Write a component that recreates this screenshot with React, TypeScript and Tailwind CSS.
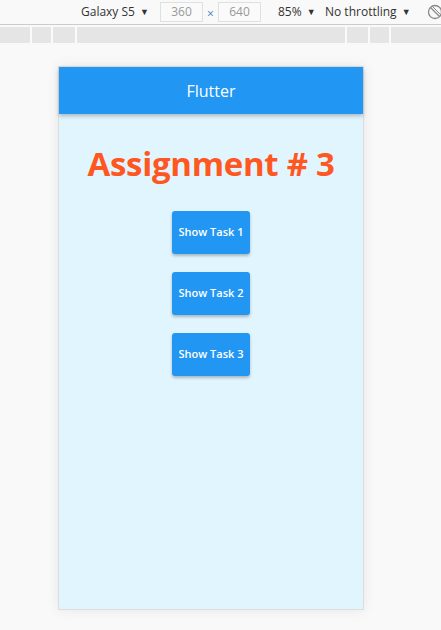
const tasks = ["Show Task 1", "Show Task 2", "Show Task 3"];

function Caret() {
  return <span className="ml-[5px] text-[9px] text-[#333]">▼</span>;
}

export default function App() {
  return (
    <div
      className="w-[441px] h-[630px] overflow-hidden bg-[#f9f9f9] flex flex-col"
      style={{ fontFamily: '"Open Sans", "Noto Sans", sans-serif' }}
    >
      {/* device toolbar */}
      <div className="h-[25px] flex items-center overflow-hidden whitespace-nowrap border-b border-[#cccccc] bg-[#f9f9f9] text-[12px] text-[#333]">
        <div className="ml-[81px] flex items-center w-[79px] shrink-0">
          Galaxy S5
          <Caret />
        </div>
        <div className="w-[43px] h-[20px] shrink-0 border border-[#e0e0e0] bg-[#fafafa] text-[#999] flex items-center justify-center">
          360
        </div>
        <span className="w-[15px] shrink-0 text-center text-[#4a7ab8] text-[12px] mt-[3px]">×</span>
        <div className="w-[43px] h-[20px] shrink-0 border border-[#e0e0e0] bg-[#fafafa] text-[#999] flex items-center justify-center">
          640
        </div>
        <div className="ml-[17px] flex items-center w-[47px] shrink-0">
          85%
          <Caret />
        </div>
        <div className="flex items-center shrink-0">
          No throttling
          <Caret />
        </div>
        <svg className="ml-[16px] shrink-0" width="16" height="16" viewBox="0 0 16 16">
          <circle cx="8" cy="8" r="6.5" fill="none" stroke="#888" strokeWidth="1.3" />
          <line x1="3.5" y1="3.5" x2="12.5" y2="12.5" stroke="#888" strokeWidth="1.3" />
          <line x1="5.5" y1="2.5" x2="13.5" y2="10.5" stroke="#888" strokeWidth="1" />
        </svg>
      </div>

      {/* media query bar */}
      <div className="mt-[2px] h-[16px] flex bg-[#e5e5e5]">
        <div className="w-[30px]" />
        <div className="w-[2px] bg-[#fafafa]" />
        <div className="w-[19px]" />
        <div className="w-[2px] bg-[#fafafa]" />
        <div className="w-[22px]" />
        <div className="w-[2px] bg-[#fafafa]" />
        <div className="w-[268px]" />
        <div className="w-[2px] bg-[#fafafa]" />
        <div className="w-[21px]" />
        <div className="w-[2px] bg-[#fafafa]" />
        <div className="w-[19px]" />
        <div className="w-[2px] bg-[#fafafa]" />
        <div className="flex-1" />
      </div>

      {/* device frame */}
      <div className="ml-[58px] mt-[23px] w-[306px] h-[544px] border border-[#dddddd] bg-[#e1f5fe] shadow-[0_0_12px_rgba(0,0,0,0.08)] flex flex-col">
        <div className="h-[47px] bg-[#2196f3] shadow-[0_2px_4px_rgba(0,0,0,0.25)] flex items-center justify-center text-white text-[16px] font-medium">
          Flutter
        </div>
        <h1 className="mt-[28px] text-center text-[#ff5722] font-bold text-[33px] leading-[44px] tracking-[-0.3px]">
          Assignment # 3
        </h1>
        <div className="mt-[25px] flex flex-col items-center gap-[18px]">
          {tasks.map((t) => (
            <button
              key={t}
              className="h-[43px] px-[7px] rounded-[3px] bg-[#2196f3] text-white text-[11px] font-semibold shadow-[0_2px_3px_rgba(0,0,0,0.25)]"
            >
              {t}
            </button>
          ))}
        </div>
      </div>
    </div>
  );
}
